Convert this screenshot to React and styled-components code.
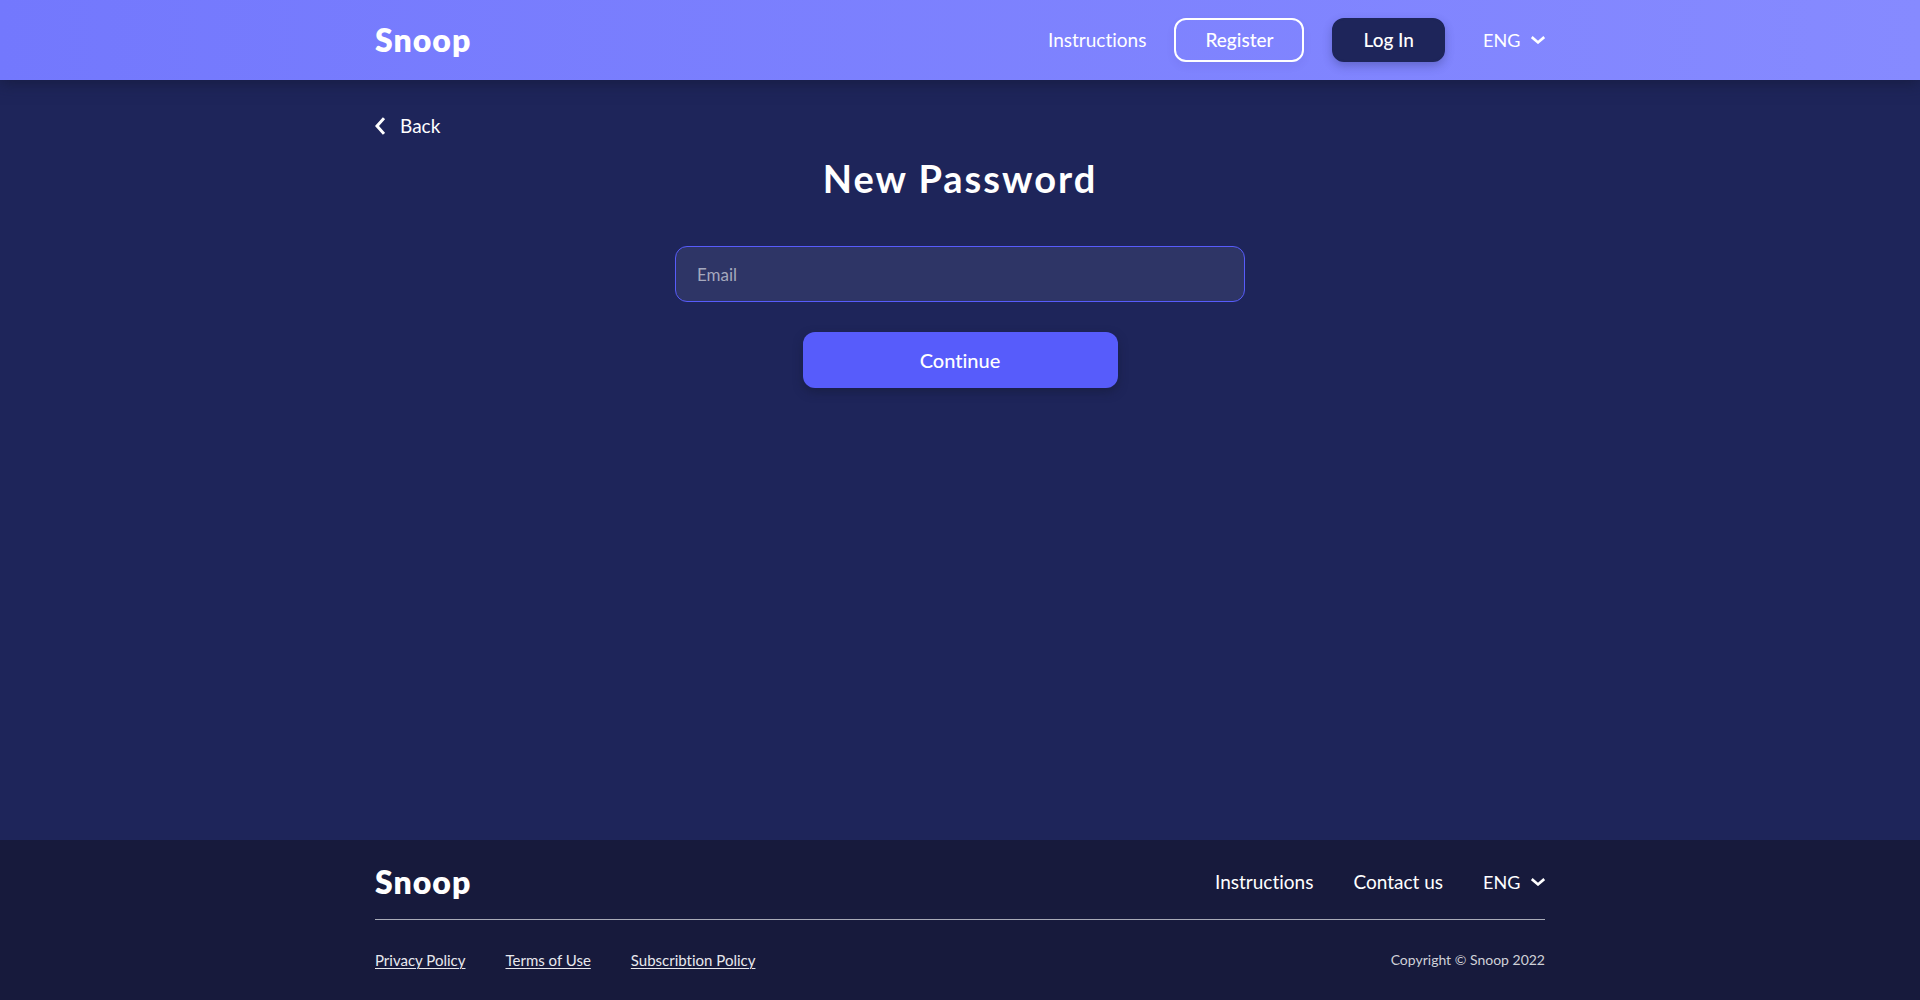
import React, { useState } from "react";
import styled, { createGlobalStyle } from "styled-components";

const GlobalStyle = createGlobalStyle`
  *, *::before, *::after { box-sizing: border-box; }
  body {
    margin: 0;
    background: #1e255a;
    color: #fff;
    font-family: Lato, "Open Sans", sans-serif;
    font-size: 18px;
    line-height: 24px;
    font-variant-ligatures: none;
  }
  button, input, select { font: inherit; font-variant-ligatures: none; color: inherit; }
`;

const Page = styled.div`
  display: flex;
  flex-direction: column;
  min-height: 100vh;
`;

const Container = styled.div`
  width: 100%;
  max-width: 1210px;
  margin: 0 auto;
  padding: 0 20px;
`;

const Header = styled.header`
  background: linear-gradient(90deg, #7378fd, #868aff);
  box-shadow: 0 4px 14px rgba(22, 26, 59, 0.7);
`;

const Bar = styled(Container)`
  display: flex;
  align-items: center;
  justify-content: space-between;
  min-height: 80px;
`;

const Logo = styled.a`
  color: #fff;
  font-size: 32px;
  line-height: 40px;
  font-weight: 800;
  letter-spacing: 1px;
  text-decoration: none;
`;

const Nav = styled.nav`
  display: flex;
  align-items: center;
  gap: ${({ $gap }) => $gap}px;
`;

const NavLink = styled.a`
  color: #fff;
  font-size: 19px;
  text-decoration: none;
`;

const NavButton = styled.button`
  height: 44px;
  padding: 0 29px;
  border: 2px solid ${({ $filled }) => ($filled ? "#1e255a" : "#fff")};
  border-radius: 12px;
  background: ${({ $filled }) => ($filled ? "#1e255a" : "transparent")};
  box-shadow: 0 4px 10px rgba(30, 37, 90, ${({ $filled }) => ($filled ? 0.3 : 0.06)});
  font-size: 19px;
  font-weight: 500;
  cursor: pointer;
`;

const LanguageField = styled.label`
  position: relative;
  display: flex;
  align-items: center;
  margin-left: ${({ $inset }) => $inset || 0}px;
`;

const LanguageSelect = styled.select`
  appearance: none;
  width: 62px;
  padding: 0;
  border: 0;
  background: transparent;
  cursor: pointer;

  option { color: #1e255a; }
`;

const SelectArrow = styled.svg`
  position: absolute;
  right: 0;
  pointer-events: none;
`;

const Main = styled(Container).attrs({ as: "main" })`
  flex: 1;
  display: flex;
  flex-direction: column;
  padding-top: 34px;
`;

const BackLink = styled.a`
  display: flex;
  align-items: center;
  align-self: flex-start;
  gap: 15px;
  color: #fff;
  font-size: 19px;
  text-decoration: none;
`;

const Title = styled.h1`
  margin: 15px 0 43px;
  font-size: 38px;
  line-height: 50px;
  font-weight: 700;
  letter-spacing: 2px;
  text-align: center;
`;

const Form = styled.form`
  display: flex;
  flex-direction: column;
  align-items: center;
  gap: 30px;
  width: 100%;
  max-width: 570px;
  margin: 0 auto;
`;

const EmailInput = styled.input`
  width: 100%;
  height: 56px;
  padding: 0 21px;
  border: 1px solid #575cfb;
  border-radius: 12px;
  background: #2e3566;
  font-size: 17px;
  outline: none;

  &::placeholder { color: #a5a8bd; opacity: 1; }
`;

const SubmitButton = styled.button`
  width: 100%;
  max-width: 315px;
  height: 56px;
  border: 0;
  border-radius: 12px;
  background: #575cfb;
  box-shadow: 0 4px 10px rgba(22, 26, 59, 0.6);
  font-size: 20px;
  font-weight: 500;
  cursor: pointer;
`;

const Footer = styled.footer`
  background: #171a3c;
`;

const FooterTop = styled.div`
  display: flex;
  align-items: center;
  justify-content: space-between;
  min-height: 80px;
  padding-top: 4px;
  border-bottom: 1px solid #a9abb8;
`;

const FooterBottom = styled.div`
  display: flex;
  align-items: center;
  justify-content: space-between;
  min-height: 80px;
  font-size: 15px;
  line-height: 20px;
`;

const Policies = styled.div`
  display: flex;
  gap: 40px;
`;

const PolicyLink = styled.a`
  color: #e8e8ed;
  text-decoration-thickness: 1px;
  text-underline-offset: 2px;
`;

const Copyright = styled.span`
  color: #d0d1d8;
  font-size: 14px;
`;

function LanguagePicker({ inset, name }) {
  const [language, setLanguage] = useState("ENG");
  return (
    <LanguageField $inset={inset}>
      <LanguageSelect
        aria-label="Language"
        name={name}
        value={language}
        onChange={(event) => setLanguage(event.target.value)}
      >
        <option>ENG</option>
      </LanguageSelect>
      <SelectArrow width="14" height="8" viewBox="0 0 14 8" fill="none" aria-hidden="true">
        <path d="M0.8 1.1 7 6.4l6.2-5.3" stroke="#fff" strokeWidth="2.6" />
      </SelectArrow>
    </LanguageField>
  );
}

export default function App() {
  const [email, setEmail] = useState("");
  return (
    <Page>
      <GlobalStyle />
      <Header>
        <Bar>
          <Logo href="#">Snoop</Logo>
          <Nav $gap={28}>
            <NavLink href="#">Instructions</NavLink>
            <NavButton type="button">Register</NavButton>
            <NavButton type="button" $filled>Log In</NavButton>
            <LanguagePicker inset={10} name="header-language" />
          </Nav>
        </Bar>
      </Header>
      <Main>
        <BackLink href="#">
          <svg width="10" height="18" viewBox="0 0 10 18" fill="none" aria-hidden="true">
            <path d="M9 1.2 2 9l7 7.8" stroke="#fff" strokeWidth="3" />
          </svg>
          Back
        </BackLink>
        <Title>New Password</Title>
        <Form onSubmit={(event) => event.preventDefault()}>
          <EmailInput
            type="email"
            name="email"
            aria-label="Email"
            placeholder="Email"
            value={email}
            onChange={(event) => setEmail(event.target.value)}
          />
          <SubmitButton type="submit">Continue</SubmitButton>
        </Form>
      </Main>
      <Footer>
        <Container>
          <FooterTop>
            <Logo href="#">Snoop</Logo>
            <Nav $gap={40}>
              <NavLink href="#">Instructions</NavLink>
              <NavLink href="#">Contact us</NavLink>
              <LanguagePicker name="footer-language" />
            </Nav>
          </FooterTop>
          <FooterBottom>
            <Policies>
              <PolicyLink href="#">Privacy Policy</PolicyLink>
              <PolicyLink href="#">Terms of Use</PolicyLink>
              <PolicyLink href="#">Subscribtion Policy</PolicyLink>
            </Policies>
            <Copyright>Copyright © Snoop 2022</Copyright>
          </FooterBottom>
        </Container>
      </Footer>
    </Page>
  );
}
